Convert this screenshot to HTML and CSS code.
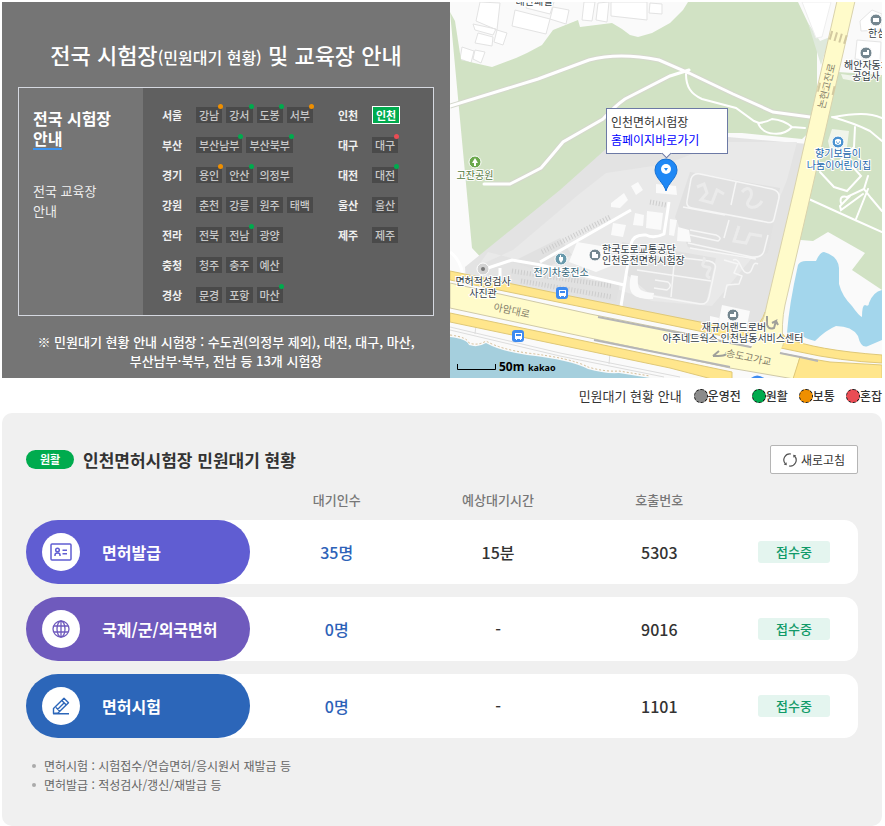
FILE: index.html
```html
<!DOCTYPE html>
<html lang="ko">
<head>
  <meta charset="UTF-8">
  <meta name="viewport" content="width=device-width, initial-scale=1">
  <title>전국 시험장 및 교육장 안내</title>
  <link rel="stylesheet" href="styles.css">
</head>
<body>

<section class="top">
  <div class="guide">
    <h1>전국 시험장<small>(민원대기 현황)</small> 및 교육장 안내</h1>

    <div class="guide-box">
      <nav class="guide-tabs">
        <a href="#" class="on">전국 시험장<br><span>안내</span></a>
        <a href="#">전국 교육장<br>안내</a>
      </nav>

      <div class="regions">
        <dl class="region-list">
          <div>
            <dt>서울</dt>
            <dd><button class="normal">강남</button><button class="smooth">강서</button><button class="smooth">도봉</button><button class="normal">서부</button></dd>
          </div>
          <div>
            <dt>부산</dt>
            <dd><button class="smooth">부산남부</button><button class="smooth">부산북부</button></dd>
          </div>
          <div>
            <dt>경기</dt>
            <dd><button class="normal">용인</button><button class="smooth">안산</button><button>의정부</button></dd>
          </div>
          <div>
            <dt>강원</dt>
            <dd><button>춘천</button><button>강릉</button><button>원주</button><button>태백</button></dd>
          </div>
          <div>
            <dt>전라</dt>
            <dd><button>전북</button><button class="smooth">전남</button><button>광양</button></dd>
          </div>
          <div>
            <dt>충청</dt>
            <dd><button>청주</button><button>충주</button><button>예산</button></dd>
          </div>
          <div>
            <dt>경상</dt>
            <dd><button>문경</button><button>포항</button><button class="smooth">마산</button></dd>
          </div>
        </dl>
        <dl class="region-list">
          <div>
            <dt>인천</dt>
            <dd><button class="selected">인천</button></dd>
          </div>
          <div>
            <dt>대구</dt>
            <dd><button class="busy">대구</button></dd>
          </div>
          <div>
            <dt>대전</dt>
            <dd><button class="smooth">대전</button></dd>
          </div>
          <div>
            <dt>울산</dt>
            <dd><button>울산</button></dd>
          </div>
          <div>
            <dt>제주</dt>
            <dd><button>제주</button></dd>
          </div>
        </dl>
      </div>
    </div>

    <p class="guide-note">※ 민원대기 현황 안내 시험장 : 수도권(의정부 제외), 대전, 대구, 마산,<br>부산남부·북부, 전남 등 13개 시험장</p>
  </div>

  <div class="map">
    <svg class="map-svg" viewBox="450 2 432 376" preserveAspectRatio="xMidYMid slice">
      <rect x="450" y="2" width="432" height="376" fill="#fafafa"/>

      <!-- buildings, top left -->
      <g fill="#fff" stroke="#e3e3e3">
        <path d="M480 2l-4 19 21 9 3-27zM475 30l-2 -6 23 5-3 6zM478 33l-3 10 17 3 1-9zM497 30l-3 12 9 3 4-12zM462 47l-2 12 11 4 3-12zM475 50l-2 9 8 4 4-11zM515 10l-3 16 34 8 4-15zM528 2l-2 6 24 6 4-12zM553 7l-3 12 16 5 3-14zM584 2l-2 18 10 1 3-19zM598 3l-2 17 11 2 2-20zM611 2v14l36 4V2zM650 3l-1 10 13 1V4z"/>
      </g>

      <!-- hills and parks -->
      <path fill="#d1e2c4" d="M450 12l5 9 6 39 31 7 24-9 11-5 15-8 11-15 25-10 2 7 32-4 10 6 8 6 8 2 14-4 18-10 13-13 5-8h110l10 21 9 17v85l-15 14-60-6-62 0-48 10-48 43-95 80-17-18z"/>
      <path fill="#dfe9dc" d="M808 23l12 18 10-4-9 28z"/>
      <path fill="#fff" stroke="#eee" d="M802 2l14 36 6-1 9-35z"/>
      <path fill="#d1e2c4" d="M838 72l44 3v215l-30-20 13-17-37-21-15 9-24-2z"/>
      <path fill="#f0f5eb" d="M843 79l11 2 1-5-14-2zM832 129l17 2-3 24-14 4-4-18z"/>

      <!-- test centre site -->
      <path fill="#e3e3e3" d="M465 267l95-77 47-42 121-11 80 7-43 190-12 6-90-12-72-16-125-30z"/>
      <path fill="#e9e9e9" d="M478 266l35-16 65-55 28-22 60-9 58-22h73l-10 38-30 72-45 54-60-5-86-29-78-20z"/>
      <path fill="#e1e1e1" d="M690 172l90 16-12 65-20 6-60-12-13-30zM622 242l94 16-10 46-56-10-24-20zM512 262l48-24 12 17-32 16zM510 270l110 14-4 18-104-23z"/>
      <path fill="#fafafa" d="M611 203l13-10 4 7-8 8-9-1zM631 186l7-4 5 8-7 5zM613 223l13 2-3 12-12-2zM635 213l9 2-1 11-10-1zM647 211l16 2-2 17-15-2zM656 184l20 2 1 9-21-2zM670 219l7 1-3 16-5-1zM678 227l11 3 2 12-14-1zM577 242l30 5 9 17-20 8-27-10zM631 275l7 1c-1 13 1 16 16 17l-1 6c-21 0-26-6-22-24zM722 305l28 6-4 19-28-5zM719 318l-9-2v7l8 2z"/>

      <g fill="none" stroke="#f6f6f6" stroke-width="1.500" stroke-linejoin="round">
        <path d="M700 174l72 15q8 2 7 9l-5 21q-1 5-8 3l-74-14q-6-1-5-7l4-22q2-6 9-5zM736 182l-5 23M683 207l42 8M729 220l-5 18M768 235l-4 16q-2 7-12 6l-64-14M690 230l26 5q7 3 2 6l-28-6M690 248l66 11M632 252l77 9q8 2 6 8l-6 28q-2 8-9 7l-48-8M675 254l-4 43M637 270l74 11M655 280l13 2q5 4-1 8l-13-2M724 260l14 4-4 9 8 3-3 8-12 1-3 13M733 260c8-3 7 12 14 13 7 1 4-13 11-9"/>
      </g>
      <g fill="none" stroke="#ebebeb" stroke-width="3">
        <path d="M697 187l7-3 3 9-6 7 11 3 5-13 7 4M742 192c7-9 13 1 7 8-6 8 8 11 13 1M739 226l-5 15 12 2 4-9 12 2M703 258c5 2-6 8 4 9 9 0-6 8 3 11"/>
      </g>

      <g fill="none" stroke="#cdcdcd" stroke-dasharray="1 2" stroke-width="5">
        <path d="M542 252l68-35M512 271l100 15M521 281l91 16M650 202l16 3"/>
      </g>
      <g fill="none" stroke="#fff" stroke-width="3" stroke-linejoin="round">
        <path d="M540 262l91-52M488 268l24-8 29 5 83 20M669 202l-5 32q-10 5-18 1-13-1-15 9l-10 62M500 268v13M450 252q10 7 13 23"/>
      </g>

      <!-- trails -->
      <g fill="none" stroke="#d5d8cd" stroke-width="5">
        <path d="M450 106l88-27 51-19q30-8 70 0l30 13 44 21 40 18 37 5M670 76l-45 23q-10 7-22 20l-40 23q-15 18-22 26-15 8-31 16h-20"/>
      </g>
      <g fill="none" stroke="#fff" stroke-width="3" stroke-linecap="round">
        <path d="M450 106l88-27 51-19q30-8 70 0l30 13 44 21 40 18 37 5M689 70l-19 6-45 23q-10 7-22 20l-40 23q-15 18-22 26-15 8-31 16h-26"/>
        <path d="M686 74c0 13 5 20 16 25l34 9 18 13 5 2q8-1 13-4 12 1 20 8l13 1M758 123c5 13 25 14 34 4M832 117q22 6 38 14l12 10M834 117q15-3 27-3t21 4M855 127l-1 20-14 14 6 9M820 172l14 15 13 4 14-15-9-10M841 203q-2-8 6-6l17-8 4-13M864 189l7 9 11 13M850 196l-10 10 1 4 22-16M868 189l-12 30M800 195l55 25 27 12" stroke-width="2"/>
      </g>

      <!-- pond and river -->
      <path fill="#a3d6ec" d="M798 265Q800 261 806 261H816Q820 252 824 252Q838 256 839 268V284Q842 296 852 306Q859 316 862 317Q862 305 865 305Q869 307 869 303Q873 292 882 290V340L868 346Q861 349 858 336Q852 326 836 326Q826 330 815 341Q803 338 802 335Q794 333 787 333Q789 305 798 265z"/>
      <path fill="#a5cfdd" d="M450 337q17 2 19 8 9 3 17-2 14 8 41 12 44 5 61 14 17 5 31 4l31 5H450z"/>
      <path fill="none" stroke="#d4bd96" stroke-dasharray="2 2" d="M450 335q17 2 19 8 9 3 17-2 14 8 41 12 44 5 61 14 17 5 31 4l31 5"/>
      <path fill="none" stroke="#ddd" d="M450 327l110 26 120 24M450 330l110 26 104 21M476 325l-1 9M610 353l-1 11M682 367l50 10"/>

      <!-- avenue along the shore -->
      <path fill="#fafafa" d="M450 280L670 325L800 352L882 363V368L800 358L670 330L450 283z"/>
      <path fill="#fffbca" stroke="#cfc9a8" d="M450 283L590 314L690 334L800 357L794 379L730 368L670 355L590 338L450 308z"/>
      <path fill="#ffe68c" stroke="#dfc878" d="M450 271L570 296L670 316L750 332Q762 323 765 312L786 338Q815 350 882 355V363Q840 361 800 352L670 325L450 280zM450 313L570 338L670 359L732 372V379H712L670 368L450 322zM800 357L830 362L882 365V379H793z"/>
      <path fill="none" stroke="#b5b5b5" stroke-width="2" d="M598 317l92 18 110 22 18 4M594 340l76 15 60 12"/>

      <!-- road to Nonhyeon -->
      <path fill="#fffbca" stroke="#d9d2ac" d="M837 1h18l-40 175-30 129q-4 18-2 41l-33-7q13-10 17-35l27-114z"/>
      <path fill="#fffbca" d="M758 335l25 8-4 13-29-6z"/>
      <g fill="none" stroke="#d3c9a0" stroke-width="9" stroke-dasharray="2 3">
        <path d="M830 35l17 5M818 87l17 4"/>
      </g>
      <path fill="none" stroke="#a0a09a" stroke-width="2" d="M767 316v9q2 5 7 3l2-7-4 2m4-2l2 4M713 356l6-5M713 356h8m-6 0q14 0 11-4"/>

      <path fill="#fff" stroke="#e5e5e5" d="M860 21l12-11 10 4v16l-21 1zM857 40l24 2-1 20-25-3z"/>

      <!-- map symbols -->
      <g fill="#74868f" stroke="#fff">
        <circle cx="876" cy="20" r="6"/>
        <circle cx="866" cy="53" r="6"/>
        <circle cx="595" cy="255" r="6"/>
        <circle cx="733" cy="315" r="6"/>
        <circle cx="561" cy="259" r="6" fill="#6899ab"/>
        <circle cx="475" cy="162" r="6" fill="#6aa84c"/>
        <circle cx="838" cy="142" r="6" fill="#4a92d0"/>
        <circle cx="483" cy="269" r="6" fill="#d2d2d2"/>
      </g>
      <circle cx="483" cy="269" r="2" fill="#777"/>
      <path fill="#fff" d="M475 158l3 5h-2v3h-2v-3h-2zM873 18h6v4h-6zM863 52h4v-2h2v5h-6zM730 314h4v-2h2v5h-6zM592 252h4v2h2v4h-6zM559 257h4v3l-2 3-2-3zM560 255h1v2h-1zM835 140l2-1h2l2 1v4l-3 1-3-1z"/>
      <path fill="none" stroke="#4a92d0" d="M836 142h1m2 0h1M837 143q1 1 2 0"/>
      <g fill="#3e8bf0">
        <rect x="556" y="287" width="12" height="12" rx="3"/>
        <rect x="512" y="330" width="12" height="12" rx="3"/>
        <path d="M751 378q6-5 13 0z"/>
      </g>
      <path fill="#fff" d="M559 290h7v6h-1v1h-1v-1h-3v1h-1v-1h-1zM515 333h7v6h-1v1h-1v-1h-3v1h-1v-1h-1z"/>
      <path fill="#3e8bf0" d="M560 291h5v2h-5zM516 334h5v2h-5z"/>

      <g class="map-label" text-anchor="middle">
        <text x="534" y="5">태산패널</text>
        <text x="475" y="179" class="park">고잔공원</text>
        <text x="561" y="276" class="charge">전기차충전소</text>
        <text x="483" y="285">면허적성검사</text>
        <text x="483" y="297">사진관</text>
        <text x="602" y="253" text-anchor="start">한국도로교통공단</text>
        <text x="602" y="264" text-anchor="start">인천운전면허시험장</text>
        <text x="734" y="331">재규어랜드로버</text>
        <text x="733" y="342">아주네드웍스 인천남동서비스센터</text>
        <text x="838" y="157" class="care">향기보듬이</text>
        <text x="839" y="169" class="care">나눔이어린이집</text>
        <text x="868" y="37" text-anchor="start">한섬</text>
        <text x="844" y="69" text-anchor="start">해안자동차</text>
        <text x="866" y="80">공업사</text>
        <text class="road" transform="translate(511 314) rotate(12)">아암대로</text>
        <text class="road" transform="translate(748 361) rotate(12)">송도고가교</text>
        <text class="road" transform="translate(830 87) rotate(-76)">논현고잔로</text>
      </g>

      <!-- scale -->
      <path fill="none" stroke="#000" d="M457.500 364v5.500h38V364"/>
      <text x="499" y="371" class="scale">50m</text>
      <text x="528" y="371" class="kakao">kakao</text>
    </svg>

    <svg class="pin" viewBox="0 0 24 34">
      <path d="M12 33C10 25 1 20 1 12a11 11 0 0 1 22 0c0 8-9 13-11 21z" fill="#1f88f5" stroke="#1670d2"/>
      <circle cx="12" cy="11" r="5" fill="#fff"/>
      <path d="M10 10h4l-2 3z" fill="#1f88f5"/>
    </svg>
    <div class="map-info">
      인천면허시험장<br>
      <a href="#">홈페이지바로가기</a>
    </div>
  </div>
</section>

<div class="legend">
  <span>민원대기 현황 안내</span>
  <ul>
    <li class="closed">운영전</li>
    <li class="smooth">원활</li>
    <li class="normal">보통</li>
    <li class="busy">혼잡</li>
  </ul>
</div>

<section class="wait">
  <div class="wait-head">
    <span class="badge">원활</span>
    <h2>인천면허시험장 민원대기 현황</h2>
    <button class="refresh">
      <svg viewBox="0 0 14 14" width="14" height="14" fill="none" stroke="#555" stroke-width="1.200">
        <path d="M8 1A6 6 0 0 0 2.500 11M6 13A6 6 0 0 0 11.500 3"/>
        <path d="M.8 11.800l3 .4-.2-3zM13.200 2.200l-3-.4.2 3z" fill="#555" stroke="none"/>
      </svg>
      새로고침
    </button>
  </div>

  <table>
    <colgroup>
      <col class="col-name"><col class="col-count"><col><col class="col-count"><col class="col-state">
    </colgroup>
    <thead>
      <tr><td></td><th>대기인수</th><th>예상대기시간</th><th>호출번호</th><td></td></tr>
    </thead>
    <tbody>
      <tr>
        <th scope="row">
          <div class="task issue">
            <i><svg viewBox="0 0 22 18" width="22" height="18" fill="none" stroke="currentColor" stroke-width="1.500">
              <rect x="1" y="1" width="20" height="16" rx="1"/>
              <circle cx="7.500" cy="7" r="1.800"/>
              <path d="M5 13v-1q0-2 2.500-2t2.500 2v1M12.500 7.200H17M12.500 10.800H17"/>
            </svg></i>
            면허발급
          </div>
        </th>
        <td class="count">35명</td>
        <td>15분</td>
        <td>5303</td>
        <td><span class="state">접수중</span></td>
      </tr>
      <tr>
        <th scope="row">
          <div class="task foreign">
            <i><svg viewBox="0 0 18 18" width="18" height="18" fill="none" stroke="currentColor" stroke-width="1.300">
              <circle cx="9" cy="9" r="8"/>
              <ellipse cx="9" cy="9" rx="4" ry="8"/>
              <path d="M9 1v16M2 6h14M2 12h14"/>
            </svg></i>
            국제/군/외국면허
          </div>
        </th>
        <td class="count">0명</td>
        <td>-</td>
        <td>9016</td>
        <td><span class="state">접수중</span></td>
      </tr>
      <tr>
        <th scope="row">
          <div class="task exam">
            <i><svg viewBox="0 0 18 18" width="18" height="18" fill="none" stroke="currentColor" stroke-width="1.400" stroke-linejoin="round">
              <path d="M1.500 16.500v-5L12 1.200l4.500 4.500L6 16zM9.800 3.500l4.500 4.500M4 10.500l3.500 3.500M5.500 12.500l6.500-6.500M1 16.800h16"/>
            </svg></i>
            면허시험
          </div>
        </th>
        <td class="count">0명</td>
        <td>-</td>
        <td>1101</td>
        <td><span class="state">접수중</span></td>
      </tr>
    </tbody>
  </table>

  <ul class="wait-notes">
    <li>면허시험 : 시험접수/연습면허/응시원서 재발급 등</li>
    <li>면허발급 : 적성검사/갱신/재발급 등</li>
  </ul>
</section>

</body>
</html>
```
FILE: styles.css
```css
* {
  box-sizing: border-box;
  margin: 0;
  padding: 0;
}

body {
  padding: 2px 3px 0 2px;
  background: #fff;
  color: #333;
  font-family: "Noto Sans CJK KR", "Noto Sans", sans-serif;
  font-size: 13px;
}

a {
  color: inherit;
  text-decoration: none;
}

ul {
  list-style: none;
}

button {
  font-family: inherit;
  cursor: pointer;
}

.top {
  display: grid;
  grid-template-columns: 448fr 432fr;
}

/* guide panel */
.guide {
  padding: 36px 16px 8px;
  background: #757575;
  color: #fff;
}

.guide h1 {
  font-size: 22px;
  font-weight: 500;
  line-height: 32px;
  text-align: center;
}

.guide h1 small {
  font-size: 16px;
}

.guide-box {
  display: flex;
  min-height: 229px;
  margin-top: 14px;
  border: 1px solid #d5d8e0;
}

.guide-tabs {
  display: flex;
  flex-direction: column;
  gap: 31px;
  width: 124px;
  padding: 20px 14px;
  font-size: 13px;
  line-height: 20px;
  color: #eee;
}

.guide-tabs .on {
  font-size: 16px;
  font-weight: 700;
  color: #fff;
}

.guide-tabs .on span {
  display: inline-block;
  border-bottom: 2px solid #3c93f0;
}

.regions {
  flex: 1;
  display: flex;
  padding: 19px 0 12px 19px;
  background: #606060;
}

.region-list {
  display: flex;
  flex-direction: column;
  gap: 14px;
  width: 176px;
}

.region-list:last-child {
  width: auto;
}

.region-list div {
  display: flex;
  align-items: center;
  height: 16px;
}

.region-list dt {
  width: 34px;
  font-size: 11px;
  font-weight: 700;
  color: #f0f0f0;
}

.region-list dd {
  display: flex;
  gap: 4px;
}

.region-list button {
  position: relative;
  height: 16px;
  padding: 0 3px;
  border: 0;
  background: #4a4a4a;
  color: #c8c8c8;
  font-size: 11px;
  font-weight: 500;
  line-height: 16px;
}

.region-list button.smooth::after,
.region-list button.normal::after,
.region-list button.busy::after {
  content: "";
  position: absolute;
  top: -3px;
  right: -1px;
  width: 5px;
  height: 5px;
  border-radius: 50%;
  background: #00ab4e;
}

.region-list button.normal::after {
  background: #ef8f00;
}

.region-list button.busy::after {
  background: #ea4c54;
}

.region-list button.selected {
  height: 18px;
  border: 1px solid #fff;
  background: #00ab4e;
  color: #fff;
  font-weight: 700;
}

.guide-note {
  margin-top: 16px;
  font-size: 13px;
  font-weight: 500;
  line-height: 19px;
  text-align: center;
}

/* map */
.map {
  position: relative;
  overflow: hidden;
}

.map-svg {
  position: absolute;
  width: 100%;
  height: 100%;
}

.map-label {
  font-size: 10px;
  fill: #333d45;
  stroke: #fff;
  stroke-width: 2px;
  paint-order: stroke;
}

.map-label .park {
  fill: #557a40;
}

.map-label .charge {
  fill: #336478;
}

.map-label .care {
  fill: #2468ad;
}

.map-label .road {
  fill: #85806a;
  stroke: #fffbca;
}

.scale {
  font: 700 12px "Noto Sans", sans-serif;
}

.kakao {
  font: 700 9px "Noto Sans", sans-serif;
}

.map-info {
  position: absolute;
  top: 106px;
  left: 50%;
  width: 122px;
  margin-left: -60px;
  padding: 4px;
  border: 1px solid #6c79a5;
  background: #fff;
  font-size: 12px;
  line-height: 18px;
}

.map-info::after {
  content: "";
  position: absolute;
  bottom: -4px;
  left: 56px;
  width: 6px;
  height: 6px;
  border: solid #6c79a5;
  border-width: 0 1px 1px 0;
  background: #fff;
  transform: rotate(45deg);
}

.map-info a {
  color: #00f;
}

.pin {
  position: absolute;
  top: 156px;
  left: 50%;
  width: 24px;
  height: 34px;
  margin-left: -12px;
}

/* status legend */
.legend {
  display: flex;
  justify-content: flex-end;
  align-items: center;
  gap: 12px;
  height: 35px;
}

.legend ul {
  display: flex;
  gap: 11px;
  font-size: 12px;
  font-weight: 500;
}

.legend li {
  display: flex;
  align-items: center;
}

.legend li::before {
  content: "";
  width: 12px;
  height: 12px;
  border: 1px dashed #111;
  border-radius: 50%;
  background: #8b8b8b;
}

.legend .smooth::before {
  background: #00ab4e;
}

.legend .normal::before {
  background: #ef8f00;
}

.legend .busy::before {
  background: #ea4c54;
}

/* waiting status */
.wait {
  padding: 32px 24px;
  border-radius: 10px;
  background: #f0f0f0;
}

.wait-head {
  display: flex;
  align-items: center;
  height: 29px;
}

.badge {
  width: 48px;
  margin-right: 9px;
  border-radius: 10px;
  background: #00ab4e;
  color: #fff;
  font-size: 11px;
  font-weight: 700;
  line-height: 19px;
  text-align: center;
}

.wait-head h2 {
  font-size: 17px;
  font-weight: 700;
  line-height: 26px;
}

.refresh {
  display: flex;
  align-items: center;
  justify-content: center;
  gap: 4px;
  width: 88px;
  height: 29px;
  margin-left: auto;
  border: 1px solid #b5b5b5;
  border-radius: 2px;
  background: #fff;
  color: #333;
  font-size: 12px;
}

table {
  width: 100%;
  table-layout: fixed;
  border-collapse: separate;
  border-spacing: 0 13px;
  text-align: center;
}

.col-name {
  width: 240px;
}

.col-count {
  width: 17%;
}

.col-state {
  width: 128px;
}

thead th {
  height: 20px;
  padding-top: 6px;
  color: #777;
  font-size: 13px;
  font-weight: 500;
  line-height: 14px;
}

tbody td {
  background: #fff;
  font-size: 16px;
  font-weight: 500;
}

tbody td:last-child {
  border-radius: 0 14px 14px 0;
}

tbody th {
  background: linear-gradient(to right, transparent 50%, #fff 50%);
}

tbody .count {
  color: #2d62b8;
}

.task {
  display: flex;
  align-items: center;
  gap: 22px;
  width: 224px;
  height: 64px;
  padding-left: 16px;
  border-radius: 32px;
  color: #fff;
  font-size: 16px;
  font-weight: 700;
}

.task i {
  display: flex;
  align-items: center;
  justify-content: center;
  width: 38px;
  height: 38px;
  border-radius: 50%;
  background: #fff;
}

.issue {
  background: #605dd2;
}

.issue i {
  color: #605dd2;
}

.foreign {
  background: #6f5abd;
}

.foreign i {
  color: #6f5abd;
}

.exam {
  background: #2c66b9;
}

.exam i {
  color: #2c66b9;
}

.state {
  display: block;
  width: 72px;
  margin: 0 auto;
  border-radius: 3px;
  background: #e4f5ef;
  color: #109a68;
  font-size: 13px;
  line-height: 22px;
}

.wait-notes {
  padding: 5px 0 0 6px;
  color: #666;
  font-size: 12px;
  line-height: 19px;
}

.wait-notes li {
  display: flex;
  align-items: center;
  gap: 8px;
}

.wait-notes li::before {
  content: "";
  width: 4px;
  height: 4px;
  border-radius: 50%;
  background: #aaa;
}
```
